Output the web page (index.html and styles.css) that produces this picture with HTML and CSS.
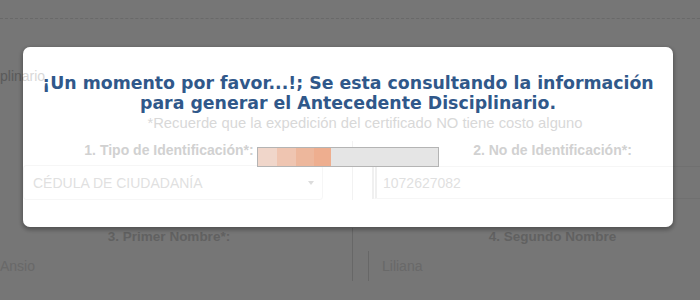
FILE: index.html
```html
<!DOCTYPE html>
<html lang="es">
<head>
<meta charset="utf-8">
<title>Antecedentes</title>
<link rel="stylesheet" href="styles.css">
</head>
<body>
<div class="page">
  <div class="topbar"></div>
  <div class="heading">plinario</div>
  <div class="note">*Recuerde que la expedición del certificado NO tiene costo alguno</div>
  <div class="form">
    <div class="field f1">
      <div class="label">1. Tipo de Identificación*:</div>
      <div class="select"><span>CÉDULA DE CIUDADANÍA</span><i class="caret"></i></div>
    </div>
    <div class="field f2">
      <div class="label">2. No de Identificación*:</div>
      <div class="input dbl"><span>1072627082</span></div>
    </div>
    <div class="field f3">
      <div class="label">3. Primer Nombre*:</div>
      <div class="input plain"><span>Ansio</span></div>
    </div>
    <div class="field f4">
      <div class="label">4. Segundo Nombre</div>
      <div class="input lines"><span>Liliana</span></div>
    </div>
  </div>
</div>

<div class="modal">
  <h1 class="title">¡Un momento por favor...!; Se esta consultando la información<br>para generar el Antecedente Disciplinario.</h1>
  <div class="bar">
    <span class="blk b1"></span><span class="blk b2"></span><span class="blk b3"></span><span class="blk b4"></span>
  </div>
</div>
</body>
</html>
```

FILE: styles.css
```css
html, body {
  margin: 0;
  padding: 0;
  background: #ffffff;
  overflow: hidden;
  width: 700px;
  height: 300px;
  font-family: "Liberation Sans", Arial, sans-serif;
}

.page {
  width: 750px;
}

.topbar {
  height: 18px;
  border-bottom: 1px dashed #e2e2e2;
}

.heading {
  margin-top: 49px;
  font-size: 14px;
  line-height: 17px;
  color: #c4c4c4;
}

.note {
  margin-top: 30px;
  width: 730px;
  text-align: center;
  font-size: 14.8px;
  line-height: 16px;
  color: #c4c4c4;
}

.form {
  margin-top: 10px;
  display: grid;
  grid-template-columns: 352px 398px;
  row-gap: 28px;
}

.field {
  display: flex;
  flex-direction: column;
}

.label {
  font-size: 14px;
  line-height: 18px;
  font-weight: bold;
  color: #b8b8b8;
  text-align: center;
  margin-bottom: 6px;
}

.f1 .label, .f3 .label {
  padding-right: 14px;
}

.f3 .label, .f4 .label {
  color: #d2d2d2;
  font-size: 13.5px;
  margin-bottom: 5px;
}

.f2 {
  border-left: 1px solid #ececec;
}

.f2 .label, .f4 .label {
  padding-left: 2px;
}

.select {
  margin-left: 23px;
  width: 300px;
  height: 35px;
  border: 1px solid #f2f2f2;
  border-radius: 3px;
  display: flex;
  align-items: center;
  justify-content: space-between;
  padding: 0 8px 0 9px;
  box-sizing: border-box;
  font-size: 14px;
  color: #d0d0d0;
}

.caret {
  width: 0;
  height: 0;
  border-left: 3px solid transparent;
  border-right: 3px solid transparent;
  border-top: 4px solid #cacaca;
}

.input {
  font-size: 14px;
  color: #d0d0d0;
  display: flex;
  align-items: center;
  box-sizing: border-box;
}

.dbl {
  margin-left: 19px;
  height: 33px;
  margin-top: 1px;
  border-left: 5px double #e8e8e8;
  border-top: 1px solid #f2f2f2;
  border-bottom: 1px solid #f2f2f2;
  padding-left: 6px;
}

.plain, .lines {
  height: 30px;
  color: #e2e2e2;
}

.f4 {
  border-left: 1px solid #dedede;
}

.lines {
  margin-left: 15px;
  border-left: 1px solid #dedede;
  padding-left: 13px;
}

/* Modal (lies over the page) */
.modal {
  position: absolute;
  left: 23px;
  top: 47px;
  width: 650px;
  height: 180px;
  box-sizing: border-box;
  border-radius: 7px;
  background: rgba(255, 255, 255, 0.35);
  box-shadow: 0 0 0 2000px rgba(0, 0, 0, 0.537), 0 2px 4px 1px rgba(0, 0, 0, 0.3);
  display: flex;
  flex-direction: column;
  align-items: center;
  padding-top: 26px;
}

.title {
  margin: 0;
  font-family: "DejaVu Sans", Verdana, sans-serif;
  font-size: 17.35px;
  line-height: 20px;
  font-weight: bold;
  color: #30588a;
  text-align: center;
  white-space: nowrap;
}

.bar {
  margin-top: 34px;
  width: 182px;
  height: 20px;
  box-sizing: border-box;
  border: 1px solid #b4b4b4;
  background: #e5e5e5;
  display: flex;
}

.blk {
  height: 100%;
}

.b1 { width: 19px; background: #f0d6ca; }
.b2 { width: 19px; background: #efc5b1; }
.b3 { width: 18px; background: #edb79c; }
.b4 { width: 17px; background: #eeae8f; }
```
